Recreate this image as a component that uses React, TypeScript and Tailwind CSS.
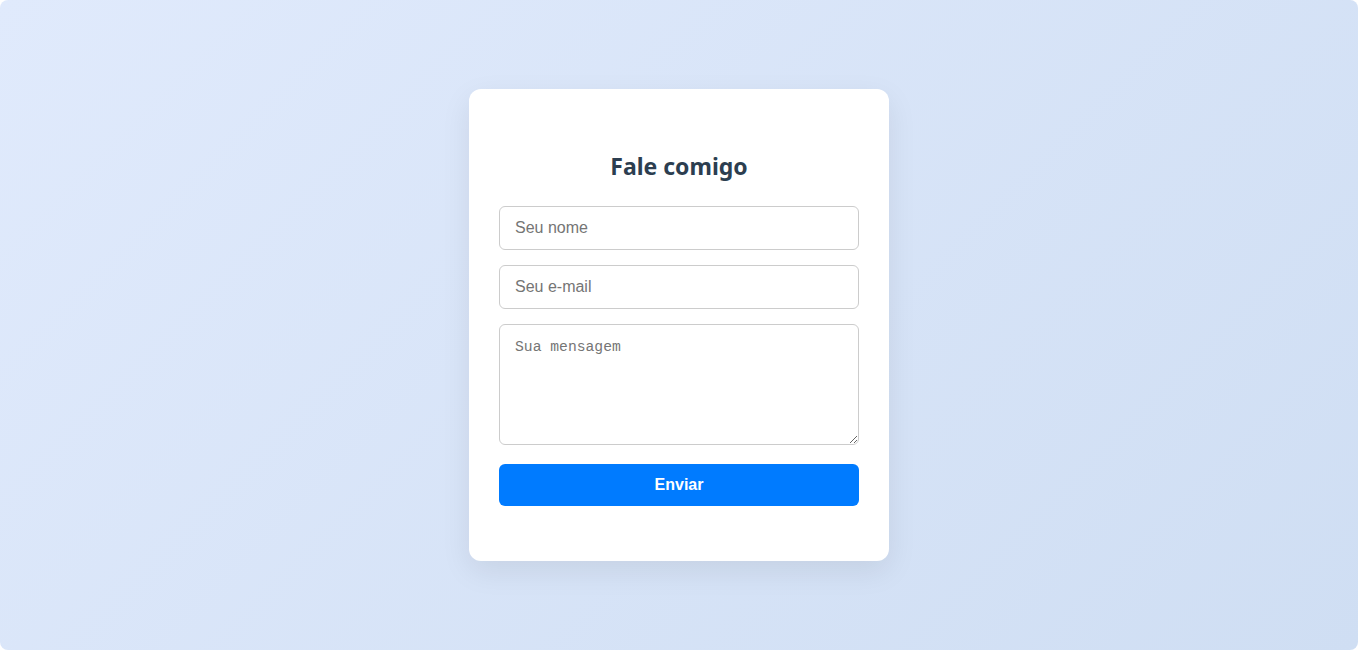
export default function App() {
  return (
    <div className="h-[650px] w-full bg-white">
      <div
        className="flex h-full w-full items-center justify-center rounded-lg bg-[linear-gradient(135deg,#e0eafc,#cfdef3)]"
        style={{ fontFamily: '"Liberation Sans", Arial, sans-serif' }}
      >
        <div className="w-[420px] rounded-xl bg-white px-[30px] pt-[40px] pb-[55px] shadow-[0_10px_30px_rgba(0,0,0,0.08)]">
          <h2 className="mt-[21px] mb-[24px] text-center text-[23px] font-bold leading-[32px] text-[#2c3e50] [font-family:'Noto_Sans',sans-serif]">
            Fale comigo
          </h2>
          <form className="flex flex-col" onSubmit={(e) => e.preventDefault()}>
            <input
              type="text"
              placeholder="Seu nome"
              className="h-[44px] w-full rounded-md border border-[#ccc] px-[15px] text-[16px] text-[#333] outline-none placeholder:text-[#757575]"
            />
            <input
              type="email"
              placeholder="Seu e-mail"
              className="mt-[15px] h-[44px] w-full rounded-md border border-[#ccc] px-[15px] text-[16px] text-[#333] outline-none placeholder:text-[#757575]"
            />
            <textarea
              placeholder="Sua mensagem"
              className="mt-[15px] h-[121px] w-full resize-y rounded-md border border-[#ccc] px-[15px] py-[12px] text-[14.7px] leading-[20px] text-[#333] outline-none placeholder:text-[#757575] [font-family:'Liberation_Mono',monospace]"
            />
            <button
              type="submit"
              className="mt-[19px] h-[42px] w-full rounded-md bg-[#007bff] text-[16px] font-bold text-white"
            >
              Enviar
            </button>
          </form>
        </div>
      </div>
    </div>
  );
}
